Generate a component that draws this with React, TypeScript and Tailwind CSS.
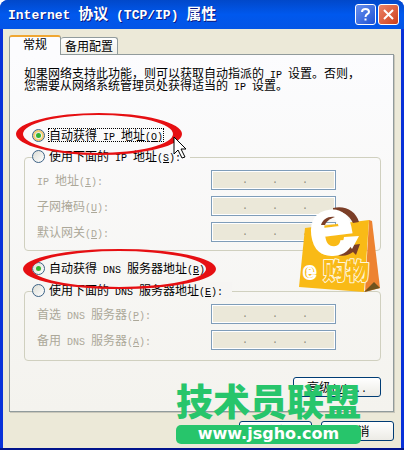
import React from 'react';

interface TextProps {
  text: string;
}

// Latin runs are half the width of a Chinese character
function Mixed({ text }: TextProps) {
  return (
    <>
      {text.split(/([\x20-\x7e]+)/).map((part, i) =>
        /^[\x20-\x7e]+$/.test(part) ? (
          <span key={i} className="font-['Liberation_Mono',monospace] text-[10px] leading-0 whitespace-pre">{part}</span>
        ) : (
          part
        )
      )}
    </>
  );
}

interface CaptionProps {
  text: string;
  hotkey: string;
  end?: string;
}

function Caption({ text, hotkey, end = '' }: CaptionProps) {
  return (
    <>
      <Mixed text={text} />
      <span className="font-['Liberation_Mono',monospace] text-[10px] leading-0">
        (<u>{hotkey}</u>){end}
      </span>
    </>
  );
}

interface OptionProps extends CaptionProps {
  id: string;
  name: string;
  checked?: boolean;
  hot?: boolean;
  focused?: boolean;
}

function Option({ id, name, checked, hot, focused, ...caption }: OptionProps) {
  return (
    <div className="flex items-center gap-[3px] h-4">
      <span className="relative flex size-[13px]">
        <input
          id={id}
          name={name}
          type="radio"
          defaultChecked={checked}
          className={`peer appearance-none size-[13px] rounded-full border border-[#3c6285] bg-linear-to-br from-[#dcdcd4] to-white ${hot ? 'shadow-[inset_0_0_0_2px_#f6cd72]' : ''}`}
        />
        <span className="pointer-events-none absolute inset-1 hidden rounded-full bg-[#32b432] peer-checked:block" />
      </span>
      <label htmlFor={id} className={`h-[14px] leading-[12px] border border-dotted whitespace-nowrap ${focused ? 'border-black' : 'border-transparent'}`}>
        <Caption {...caption} />
      </label>
    </div>
  );
}

interface AddressRowProps extends CaptionProps {
  id: string;
}

function AddressRow({ id, ...caption }: AddressRowProps) {
  return (
    <div className="flex items-center justify-between h-5 text-[#aca899]">
      <label htmlFor={id} className="whitespace-nowrap"><Caption {...caption} end=":" /></label>
      <input
        id={id}
        disabled
        defaultValue="    .    .    ."
        className="w-[125px] h-5 px-[6px] border border-[#7f9db9] bg-[#ebe8d9] shadow-[inset_0_0_0_1px_#ffffff] font-['Liberation_Mono',monospace] text-[10px] whitespace-pre text-[#8d8a7c]"
      />
    </div>
  );
}

function Logo() {
  return (
    <svg viewBox="0 0 90 95" className="absolute left-[295px] top-[202px] w-[90px] h-[95px] overflow-visible" aria-hidden="true">
      <path d="M74 18 L77 19 L85 86 L70 90Z" fill="#ed8230" />
      <path d="M79 80 L85 86 L69 90Z" fill="#71531d" />
      <path d="M10 26 L74 18 L69 90 L4 85Z" fill="#f9ba16" />
      <path d="M38 6 C50 3 61 9 64 20 L58 21 C54 13 48 9 38 9Z" fill="#7b3e27" />
      <path d="M40 52 C48 52 54 48 57 43 L65 42 L61 53 L58 50 C53 54 46 55 40 52Z" fill="#7b3e27" />
      <text x="14" y="52" fontSize="81" fontWeight="700" fill="#ffffff" stroke="#ffffff" strokeWidth="2" transform="rotate(-7 38 30)" fontFamily="Liberation Sans, sans-serif">e</text>
      <path d="M26 23 C28 17 33 14 40 15 C34 17 31 20 30 23Z" fill="#7b3e27" />
      <path d="M49 35 L64 34 L57 47 L54 43 L47 45Z" fill="#ffffff" />
      <text x="8" y="77" fontSize="24" fontWeight="700" fill="#f9ba16" stroke="#ffffff" strokeWidth="2" strokeLinejoin="round" fontFamily="Liberation Sans, sans-serif">e</text>
      <text x="28" y="77" fontSize="23" fontWeight="900" fill="#f9ba16" stroke="#fff6d8" strokeWidth="2" strokeLinejoin="round" paintOrder="stroke" fontFamily="Noto Sans CJK SC, sans-serif">购物</text>
    </svg>
  );
}

function Rings() {
  return (
    <svg viewBox="0 0 404 450" className="pointer-events-none absolute left-0 top-0 w-[404px] h-[450px]" aria-hidden="true">
      <g fill="#e60f12" fillRule="evenodd">
        <path d="M16 134 A83 21 0 0 1 182 134 A83 21 0 0 1 16 134Z M23 134 A75 19 0 0 0 173 134 A75 19 0 0 0 23 134Z" />
        <path d="M23 269 A96 20 0 0 1 216 269 A96 20 0 0 1 23 269Z M32 269 A87 18 0 0 0 206 269 A87 18 0 0 0 32 269Z" />
      </g>
      <path d="M174 137 V154 L178 150 L182 158 L185 157 L181 149 H186Z" fill="#ffffff" stroke="#000000" />
    </svg>
  );
}

const button = 'h-5 rounded-[3px] border border-[#003c74] bg-linear-to-b from-white to-[#ecebe5] text-xs leading-[16px]';

export default function App() {
  return (
    <main className="relative w-full bg-[#0831d9] rounded-t-lg text-black text-xs leading-[12px] font-['Noto_Sans_CJK_SC',sans-serif]">
      <header className="flex items-center justify-between h-[29px] pl-2 pr-[5px] rounded-t-lg bg-linear-to-b from-[#0148c9] via-[#0058ee] to-[#0455e6]">
        <h1 className="text-white text-[15px] font-bold whitespace-pre [text-shadow:1px_1px_#0a1883]">
          <span className="font-['Liberation_Mono',monospace] text-[13px]">Internet </span>协议
          <span className="font-['Liberation_Mono',monospace] text-[13px]"> (TCP/IP) </span>属性
        </h1>
        <div className="flex gap-[2px]">
          <button aria-label="帮助" className="flex items-center justify-center size-[21px] rounded-[3px] border border-white bg-linear-to-br from-[#6990ed] to-[#1c50d4]">
            <svg viewBox="0 0 13 13" className="size-[13px]" fill="none" stroke="#ffffff" strokeWidth="2">
              <path d="M3 4 C3 0 10 0 10 4 C10 6 6.5 6 6.5 9 M6.5 10.5 V12.5" />
            </svg>
          </button>
          <button aria-label="关闭" className="flex items-center justify-center size-[21px] rounded-[3px] border border-white bg-linear-to-br from-[#ec8367] to-[#cd3c13]">
            <svg viewBox="0 0 13 13" className="size-[13px]" fill="none" stroke="#ffffff" strokeWidth="2">
              <path d="M2 2 L11 11 M11 2 L2 11" />
            </svg>
          </button>
        </div>
      </header>

      <div className="mx-[3px] pt-[6px] pl-[6px] pr-[7px] pb-[7px] bg-[#ece9d8]">
        <nav className="flex items-end h-[19px]">
          <button className="relative z-10 h-5 -mb-px w-[52px] pb-1 rounded-t-[3px] border border-b-0 border-[#919b9c] border-t-2 border-t-[#f0a732] bg-[#fcfcfe]">常规</button>
          <button className="h-[17px] w-[57px] whitespace-nowrap rounded-t-[3px] border border-l-0 border-b-0 border-[#919b9c] bg-linear-to-b from-white to-[#f0f0ea]">备用配置</button>
        </nav>

        {/* Tab page */}
        <section className="h-[358px] pt-3 pl-[14px] pr-3 border border-[#919b9c] shadow-[1px_1px_#c9c7ba] bg-linear-to-b from-[#fcfcfe] to-[#f4f3ee]">
          <p className="h-[60px]">
            <Mixed text="如果网络支持此功能，则可以获取自动指派的 IP 设置。否则，" />
            <br />
            <Mixed text="您需要从网络系统管理员处获得适当的 IP 设置。" />
          </p>

          <div className="pl-2">
            <Option id="ip-auto" name="ip" checked hot focused text="自动获得 IP 地址" hotkey="O" />
          </div>
          <fieldset className="mt-[14px] mb-[9px] h-[94px] border border-[#d0d0bf] rounded-[4px] pl-3 pr-11">
            <div className="flex -ml-[5px] -mt-[10px] mb-[6px]">
              <div className="bg-[#faf9fa] pr-2">
                <Option id="ip-manual" name="ip" text="使用下面的 IP 地址" hotkey="S" end=":" />
              </div>
            </div>
            <div className="flex flex-col gap-[6px]">
              <AddressRow id="ip" text="IP 地址" hotkey="I" />
              <AddressRow id="mask" text="子网掩码" hotkey="U" />
              <AddressRow id="gateway" text="默认网关" hotkey="D" />
            </div>
          </fieldset>

          <div className="pl-2">
            <Option id="dns-auto" name="dns" checked text="自动获得 DNS 服务器地址" hotkey="B" />
          </div>
          <fieldset className="mt-[15px] mb-4 h-[70px] border border-[#d0d0bf] rounded-[4px] pl-3 pr-11">
            <div className="flex -ml-[5px] -mt-[10px] mb-[6px]">
              <div className="bg-[#f6f5f3] pr-2">
                <Option id="dns-manual" name="dns" text="使用下面的 DNS 服务器地址" hotkey="E" end=":" />
              </div>
            </div>
            <div className="flex flex-col gap-[6px]">
              <AddressRow id="dns1" text="首选 DNS 服务器" hotkey="P" />
              <AddressRow id="dns2" text="备用 DNS 服务器" hotkey="A" />
            </div>
          </fieldset>

          <div className="flex justify-end">
            <button className={`${button} w-[88px]`}><Caption text="高级" hotkey="V" end="..." /></button>
          </div>
        </section>

        <footer className="flex justify-end gap-[9px] mt-[9px]">
          <button className={`${button} w-[73px]`}>确定</button>
          <button className={`${button} w-[73px]`}>取消</button>
        </footer>
      </div>
      <div className="h-[3px] bg-[#00138c]" />

      <Rings />
      <Logo />

      {/* Site mark */}
      <div className="absolute left-[176px] top-[381px] w-[185px] text-[#27c56b]">
        <p className="text-[37px] leading-[38px] font-black whitespace-nowrap">技术员联盟</p>
        <p className="mt-[6px] h-[19px] rounded-[5px] bg-[#27c56b] text-center text-white text-base leading-[17px] font-bold font-['DejaVu_Sans',sans-serif]">www.jsgho.com</p>
      </div>
    </main>
  );
}
